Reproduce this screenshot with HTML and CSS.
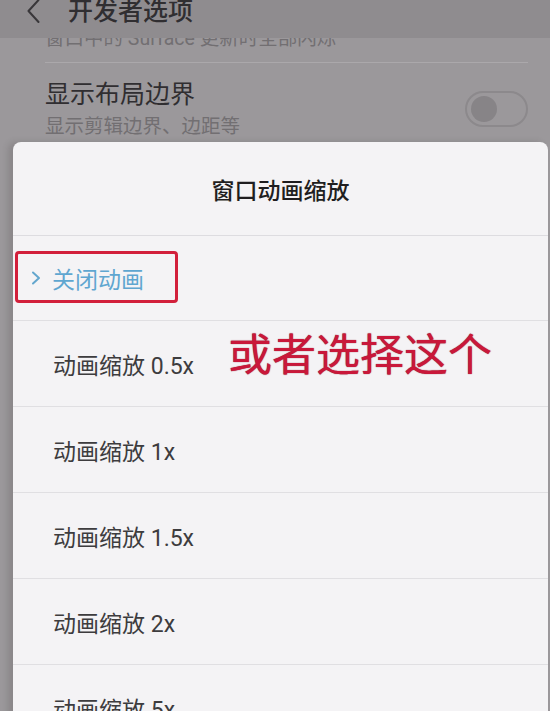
FILE: index.html
```html
<!DOCTYPE html>
<html lang="zh-CN">
<head>
<meta charset="utf-8">
<title>窗口动画缩放</title>
<link rel="stylesheet" href="styles.css">
</head>
<body>
<div class="screen">
  <div class="appbar">
    <svg class="back" width="14" height="26" viewBox="0 0 14 26"><path d="M11.5 1 L1.5 12 L11.5 23" fill="none" stroke="#39373a" stroke-width="2" stroke-linecap="round" stroke-linejoin="round"/></svg>
    <span class="appbar-title">开发者选项</span>
  </div>
  <div class="list">
    <div class="item partial">
      <div class="sub">窗口中的 Surface 更新时全部闪烁</div>
    </div>
    <div class="item row">
      <div class="texts">
        <div class="head">显示布局边界</div>
        <div class="sub">显示剪辑边界、边距等</div>
      </div>
      <div class="toggle"><span class="knob"></span></div>
    </div>
  </div>

  <div class="dialog">
    <div class="dlg-title">窗口动画缩放</div>
    <div class="opt first selected">
      <svg class="chev" width="10" height="16" viewBox="0 0 10 16"><path d="M2 2.5 L8 8 L2 13.5" fill="none" stroke="#63a6cd" stroke-width="2" stroke-linecap="round" stroke-linejoin="round"/></svg>
      <span>关闭动画</span>
      <span class="mark"></span>
    </div>
    <div class="opt">动画缩放 0.5x<span class="note">或者选择这个</span></div>
    <div class="opt">动画缩放 1x</div>
    <div class="opt">动画缩放 1.5x</div>
    <div class="opt">动画缩放 2x</div>
    <div class="opt">动画缩放 5x</div>
  </div>
</div>
</body>
</html>
```
FILE: styles.css
```css
html, body {
  margin: 0;
  padding: 0;
}
body {
  width: 550px;
  height: 711px;
  overflow: hidden;
  font-family: "Roboto", "Noto Sans CJK SC", "Noto Sans", sans-serif;
}
.screen {
  position: relative;
  width: 550px;
  height: 711px;
  overflow: hidden;
  background: #9b989b;
}
.appbar {
  height: 38px;
  background: #8f8c8f;
  display: flex;
  align-items: flex-start;
  padding-left: 27px;
  gap: 27px;
}
.back {
  display: block;
  margin-top: -1px;
}
.appbar-title {
  font-size: 25px;
  line-height: 26px;
  font-weight: 500;
  color: #302e31;
  margin-top: -1px;
}
.list {
  padding-left: 45px;
  padding-right: 22px;
  overflow: hidden;
}
.item .sub {
  font-size: 19.5px;
  line-height: 24px;
  color: #726f72;
}
.partial {
  border-bottom: 1px solid #aba8ab;
  padding-bottom: 11px;
}
.partial .sub {
  margin-top: -11px;
}
.row {
  display: flex;
  justify-content: space-between;
  align-items: flex-start;
  padding-top: 16px;
}
.head {
  font-size: 25px;
  line-height: 32px;
  color: #302e31;
}
.row .sub {
  margin-top: 4px;
}
.toggle {
  margin-top: 12px;
  width: 63px;
  height: 36px;
  box-sizing: border-box;
  border: 2px solid #8c898c;
  border-radius: 18px;
  display: flex;
  align-items: center;
  padding-left: 4px;
}
.knob {
  width: 26px;
  height: 26px;
  border-radius: 50%;
  background: #878487;
}
.dialog {
  position: absolute;
  left: 13px;
  top: 142px;
  width: 535px;
  bottom: -40px;
  background: #f4f3f5;
  border-radius: 8px 8px 0 0;
  box-shadow: -5px 0 6px rgba(60, 55, 58, 0.18);
}
.dlg-title {
  height: 93px;
  display: flex;
  align-items: center;
  justify-content: center;
  font-size: 23px;
  font-weight: 500;
  color: #1f1e20;
  border-bottom: 1px solid #dddce0;
}
.opt {
  position: relative;
  box-sizing: border-box;
  height: 86px;
  display: flex;
  align-items: center;
  padding-left: 40px;
  font-size: 23px;
  color: #3d3c3e;
  border-bottom: 1px solid #e0dfe2;
}
.opt.first {
  height: 85px;
}
.selected {
  padding-left: 18px;
  gap: 11px;
  color: #5fa6d0;
}
.chev {
  display: block;
}
.mark {
  position: absolute;
  left: 2px;
  top: 15px;
  width: 163px;
  height: 52px;
  box-sizing: border-box;
  border: 3px solid #d2203b;
  border-radius: 4px;
}
.note {
  position: absolute;
  left: 215px;
  top: 13px;
  font-size: 44px;
  line-height: 44px;
  color: #c9183a;
  text-shadow: 0 0 1px #7d0c20;
}
```
